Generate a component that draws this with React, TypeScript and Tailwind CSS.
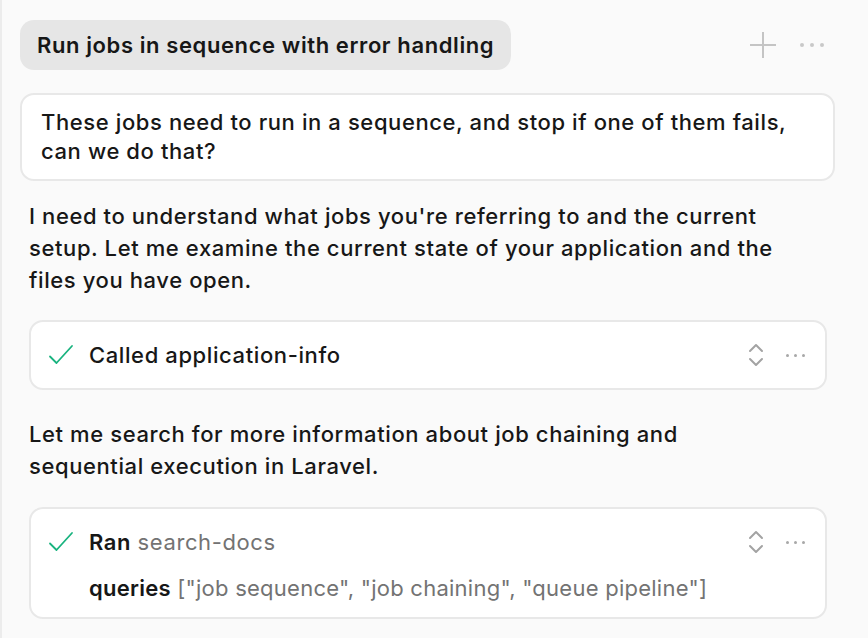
const Dots = ({ className }: { className: string }) => (
	<div className={`flex items-center gap-[5px] ${className}`}>
		<span className="h-[3px] w-[3px] rounded-full bg-current" />
		<span className="h-[3px] w-[3px] rounded-full bg-current" />
		<span className="h-[3px] w-[3px] rounded-full bg-current" />
	</div>
);

const Check = () => (
	<svg width="26" height="26" viewBox="0 0 26 26" fill="none" className="shrink-0 text-[#19b37f]">
		<path d="M2 14.5 8.5 21 24 4" stroke="currentColor" strokeWidth="1.8" strokeLinecap="round" strokeLinejoin="round" />
	</svg>
);

const UpDown = () => (
	<svg width="16" height="26" viewBox="0 0 16 26" fill="none" className="mr-[22px] shrink-0 text-[#a3a3a3]">
		<path d="M2 9 8 3l6 6M2 17l6 6 6-6" stroke="currentColor" strokeWidth="2" strokeLinecap="round" strokeLinejoin="round" />
	</svg>
);

const ToolCard = ({ children, extra }: { children: React.ReactNode; extra?: React.ReactNode }) => (
	<div className="ml-[9px] mr-[41px] rounded-[14px] border-2 border-[#e8e8e8] bg-white pl-[17px] pr-[20px]">
		<div className="flex h-[66px] items-center">
			<Check />
			<div className="ml-[15px] flex-1 text-[22px] font-medium tracking-[0.6px] text-[#171717]">{children}</div>
			<UpDown />
			<Dots className="text-[#a8a8a8]" />
		</div>
		{extra}
	</div>
);

export default function App() {
	return (
		<div
			className="min-h-[638px] border-l-2 border-[#ececec] bg-[#fafafa] pt-[20px] pl-[18px] text-[#171717]"
			style={{ fontFamily: 'Inter, "Noto Sans", sans-serif' }}
		>
			<div className="flex items-center pr-[44px]">
				<div className="flex h-[50px] items-center rounded-[14px] bg-[#e6e6e6] px-[17px] text-[22px] font-semibold tracking-[0.6px]">
					Run jobs in sequence with error handling
				</div>
				<div className="flex-1" />
				<svg width="26" height="26" viewBox="0 0 26 26" className="text-[#c4c4c4]">
					<path d="M13 0v26M0 13h26" stroke="currentColor" strokeWidth="2" />
				</svg>
				<div className="ml-[24px] flex items-center gap-[6px] text-[#c8c8c8]">
					<span className="h-[4px] w-[4px] rounded-full bg-current" />
					<span className="h-[4px] w-[4px] rounded-full bg-current" />
					<span className="h-[4px] w-[4px] rounded-full bg-current" />
				</div>
			</div>

			<div className="mt-[23px] mr-[33px] rounded-[14px] border-2 border-[#e8e8e8] bg-white px-[19px] py-[13px] text-[22px] font-medium leading-[29px] tracking-[0.6px]">
				These jobs need to run in a sequence, and stop if one of them fails,
				<br />
				can we do that?
			</div>

			<p className="mt-[19px] ml-[9px] mr-[60px] text-[22px] font-medium leading-[32px] tracking-[0.6px]">
				I need to understand what jobs you're referring to and the current setup. Let me examine the current state of your application and the files you have open.
			</p>

			<div className="mt-[24px]">
				<ToolCard>Called application-info</ToolCard>
			</div>

			<p className="mt-[28px] ml-[9px] mr-[139px] text-[22px] font-medium leading-[32px] tracking-[0.6px]">
				Let me search for more information about job chaining and sequential execution in Laravel.
			</p>

			<div className="mt-[25px]">
				<ToolCard
					extra={
						<div className="-mt-[2px] pb-[14px] pl-[41px] text-[22px] leading-[30px] tracking-[0.25px]">
							<span className="font-semibold text-[#171717]">queries</span>{' '}
							<span className="text-[#737373]">["job sequence", "job chaining", "queue pipeline"]</span>
						</div>
					}
				>
					<span className="font-semibold">Ran</span>{' '}
					<span className="font-normal text-[#737373]">search-docs</span>
				</ToolCard>
			</div>
		</div>
	);
}
